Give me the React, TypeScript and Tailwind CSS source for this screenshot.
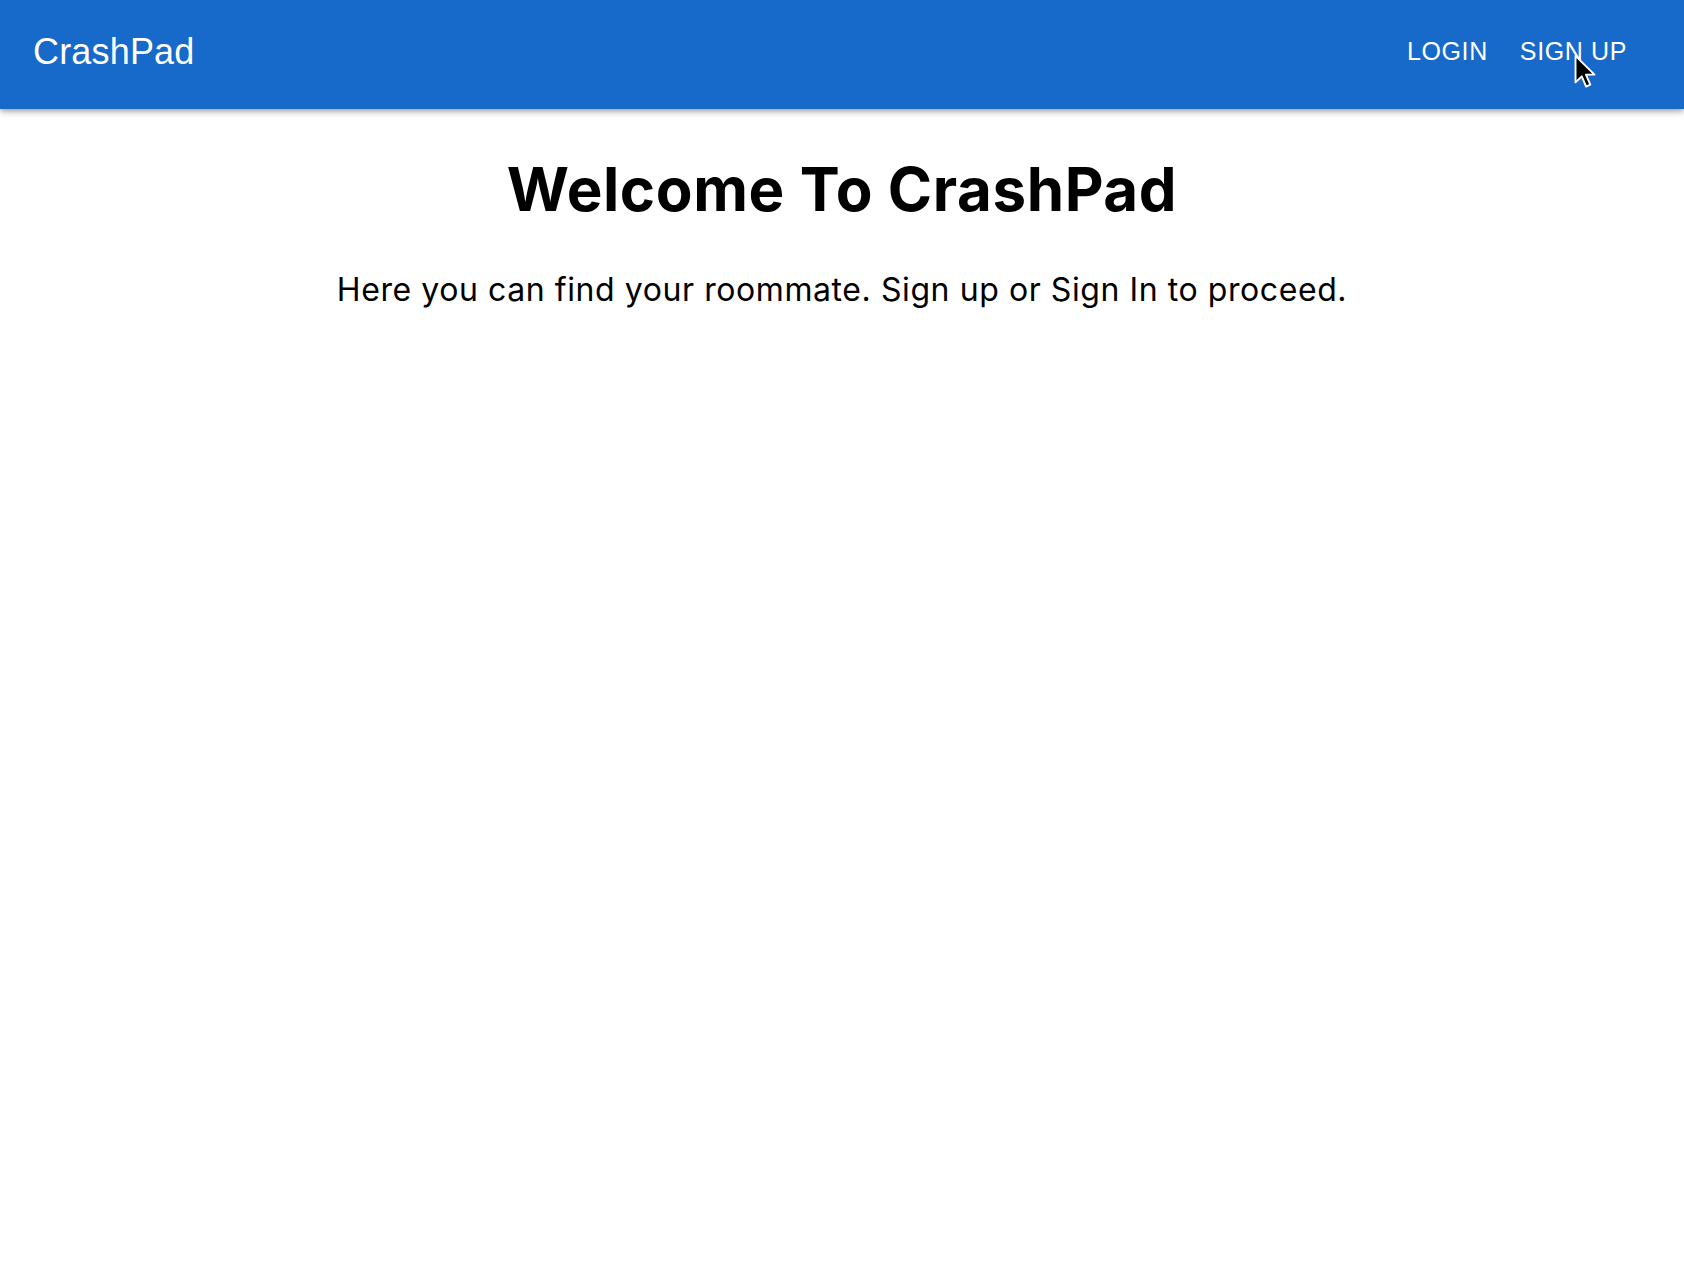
export default function App() {
  return (
    <div className="min-h-screen bg-white relative">
      {/* Header */}
      <header className="h-[109px] bg-[#1769ca] shadow-[0_2px_4px_-1px_rgba(0,0,0,0.2),0_4px_5px_0_rgba(0,0,0,0.14),0_1px_10px_0_rgba(0,0,0,0.12)] flex items-center justify-between pl-[33px] pr-[47px] font-['Liberation_Sans',Arial,sans-serif] text-white">
        <div className="text-[36px] leading-none -mt-[6px] tracking-[0.005em]">CrashPad</div>
        <nav className="flex items-center gap-[12px] -mt-[6px]">
          <button className="px-[10px] py-[6px] text-[25px] leading-none tracking-[0.025em] uppercase">
            Login
          </button>
          <button className="px-[10px] py-[6px] text-[25px] leading-none tracking-[0.025em] uppercase">
            Sign Up
          </button>
        </nav>
      </header>

      {/* Main Content */}
      <main className="flex flex-col items-center text-black font-['Inter',sans-serif]">
        <h1 className="mt-[40px] text-[60px] leading-[80px] font-bold tracking-[0.01em]">
          Welcome To CrashPad
        </h1>
        <p className="mt-[41px] text-[32px] leading-[40px] tracking-[0.018em]">
          Here you can find your roommate. Sign up or Sign In to proceed.
        </p>
      </main>

      {/* mouse pointer */}
      <svg
        className="absolute left-[1573px] top-[54px] w-[24px] h-[36px]"
        viewBox="0 0 12 19"
      >
        <path
          d="M1 1 L1 15 L4.3 11.8 L6.6 17.2 L8.8 16.2 L6.5 10.9 L11 10.9 Z"
          fill="black"
          stroke="white"
          strokeWidth={1}
          strokeLinejoin="round"
        />
      </svg>
    </div>
  );
}
